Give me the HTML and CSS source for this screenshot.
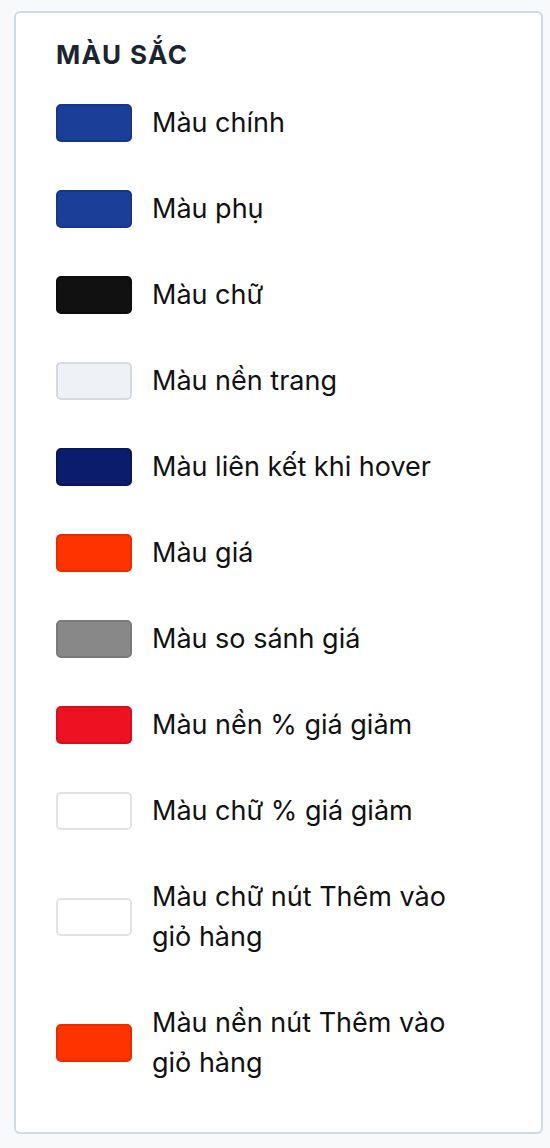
FILE: index.html
```html
<!DOCTYPE html>
<html lang="vi">
<head>
<meta charset="utf-8">
<link rel="stylesheet" href="styles.css">
</head>
<body>
<section class="card">
  <h2 class="title">MÀU SẮC</h2>
  <ul class="list">
    <li class="item"><span class="swatch sw-primary"></span><span class="label">Màu chính</span></li>
    <li class="item"><span class="swatch sw-primary"></span><span class="label">Màu phụ</span></li>
    <li class="item"><span class="swatch sw-text"></span><span class="label">Màu chữ</span></li>
    <li class="item"><span class="swatch sw-bg"></span><span class="label">Màu nền trang</span></li>
    <li class="item"><span class="swatch sw-hover"></span><span class="label">Màu liên kết khi hover</span></li>
    <li class="item"><span class="swatch sw-price"></span><span class="label">Màu giá</span></li>
    <li class="item"><span class="swatch sw-compare"></span><span class="label">Màu so sánh giá</span></li>
    <li class="item"><span class="swatch sw-sale"></span><span class="label">Màu nền % giá giảm</span></li>
    <li class="item"><span class="swatch sw-white"></span><span class="label">Màu chữ % giá giảm</span></li>
    <li class="item"><span class="swatch sw-white"></span><span class="label">Màu chữ nút Thêm vào giỏ hàng</span></li>
    <li class="item"><span class="swatch sw-price"></span><span class="label">Màu nền nút Thêm vào giỏ hàng</span></li>
  </ul>
</section>
</body>
</html>
```

FILE: styles.css
```css
html, body {
  margin: 0;
  padding: 0;
  background: #f7f9fb;
}
body {
  font-family: Inter, "Noto Sans", "Liberation Sans", sans-serif;
  color: #111111;
}
.card {
  margin: 11px 0 0 14px;
  width: 529px;
  height: 1123px;
  box-sizing: border-box;
  border: 2px solid #d0dae0;
  border-radius: 6px;
  background: #ffffff;
  padding: 26px 40px 0 40px;
}
.title {
  margin: 0;
  font-size: 26px;
  line-height: 32px;
  font-weight: 700;
  letter-spacing: 1.4px;
  color: #1b2530;
}
.list {
  list-style: none;
  margin: 32px 0 0 0;
  padding: 0;
  display: flex;
  flex-direction: column;
  gap: 46px;
}
.item {
  display: flex;
  align-items: center;
  gap: 20px;
}
.swatch {
  flex: none;
  width: 76px;
  height: 38px;
  box-sizing: border-box;
  border-radius: 5px;
  border: 2px solid rgba(0, 0, 0, 0.12);
}
.label {
  font-size: 27px;
  line-height: 40px;
  max-width: 310px;
}
.sw-primary { background: #1b3f99; border-color: #173689; }
.sw-text { background: #111111; border-color: #0c0c0c; }
.sw-bg { background: #eef2f6; border-color: #d6dadf; }
.sw-hover { background: #0a1c6b; border-color: #08175a; }
.sw-price { background: #ff3300; border-color: #e52e00; }
.sw-compare { background: #888888; border-color: #7a7a7a; }
.sw-sale { background: #ee1122; border-color: #d60f1e; }
.sw-white { background: #ffffff; border-color: #e3e3e3; }
```
